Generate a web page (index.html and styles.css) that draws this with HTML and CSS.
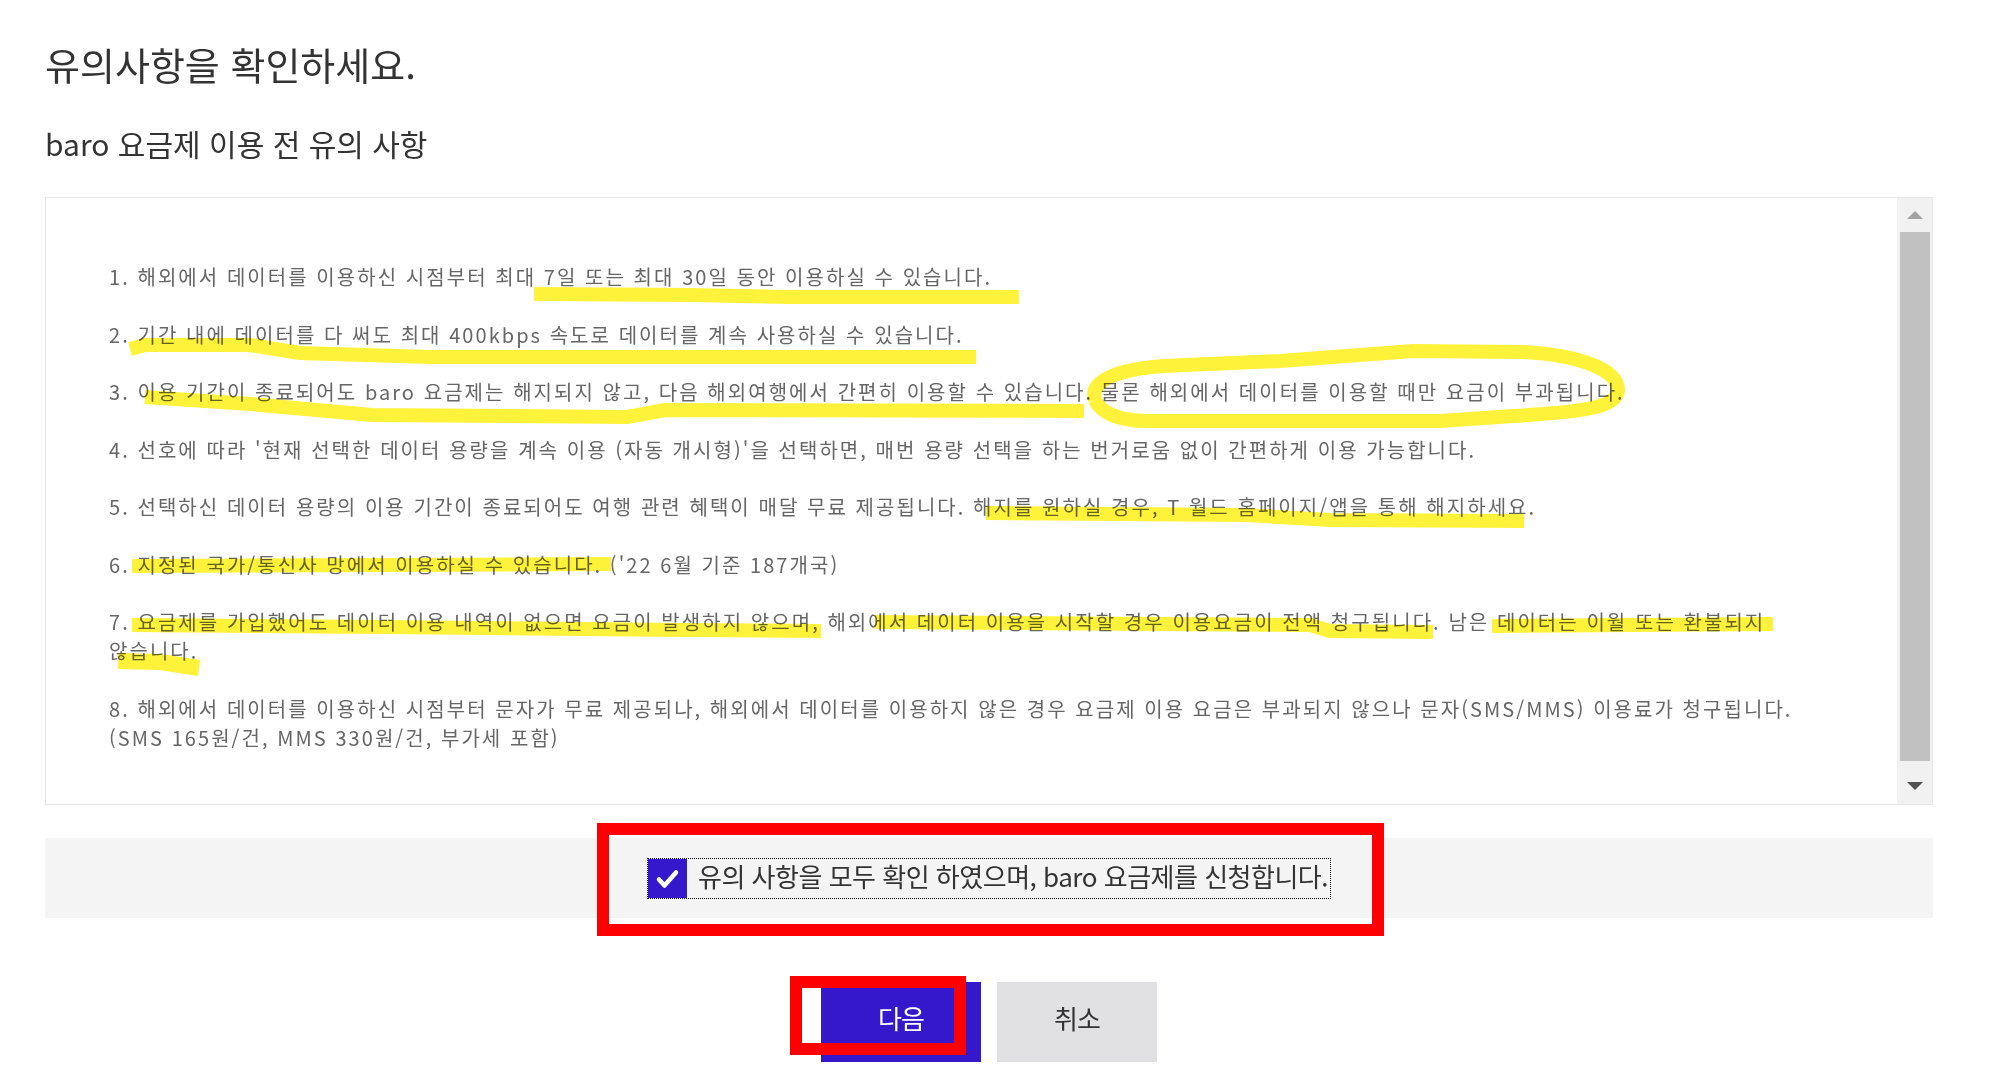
FILE: index.html
```html
<!DOCTYPE html>
<html lang="ko">
<head>
    <meta charset="UTF-8">
    <meta name="viewport" content="width=device-width, initial-scale=1.0">
    <title>baro 요금제 유의사항</title>
    <link rel="stylesheet" href="styles.css">
</head>
<body>
    <div class="page">
        <h1 class="title">유의사항을 확인하세요.</h1>
        <h2 class="subtitle">baro 요금제 이용 전 유의 사항</h2>

        <div class="notice-box">
            <ol class="notice-list">
                <li>1. 해외에서 데이터를 이용하신 시점부터 최대 7일 또는 최대 30일 동안 이용하실 수 있습니다.</li>
                <li>2. 기간 내에 데이터를 다 써도 최대 400kbps 속도로 데이터를 계속 사용하실 수 있습니다.</li>
                <li>3. 이용 기간이 종료되어도 baro 요금제는 해지되지 않고, 다음 해외여행에서 간편히 이용할 수 있습니다. 물론 해외에서 데이터를 이용할 때만 요금이 부과됩니다.</li>
                <li>4. 선호에 따라 '현재 선택한 데이터 용량을 계속 이용 (자동 개시형)'을 선택하면, 매번 용량 선택을 하는 번거로움 없이 간편하게 이용 가능합니다.</li>
                <li>5. 선택하신 데이터 용량의 이용 기간이 종료되어도 여행 관련 혜택이 매달 무료 제공됩니다. 해지를 원하실 경우, T 월드 홈페이지/앱을 통해 해지하세요.</li>
                <li>6. 지정된 국가/통신사 망에서 이용하실 수 있습니다. ('22 6월 기준 187개국)</li>
                <li>7. 요금제를 가입했어도 데이터 이용 내역이 없으면 요금이 발생하지 않으며, 해외에서 데이터 이용을 시작할 경우 이용요금이 전액 청구됩니다. 남은 데이터는 이월 또는 환불되지<br>않습니다.</li>
                <li>8. 해외에서 데이터를 이용하신 시점부터 문자가 무료 제공되나, 해외에서 데이터를 이용하지 않은 경우 요금제 이용 요금은 부과되지 않으나 문자(SMS/MMS) 이용료가 청구됩니다.<br>(SMS 165원/건, MMS 330원/건, 부가세 포함)</li>
            </ol>
            <div class="scrollbar">
                <span class="scroll-btn up"></span>
                <span class="scroll-thumb"></span>
                <span class="scroll-btn down"></span>
            </div>
        </div>

        <div class="agree-bar">
            <label class="agree">
                <span class="checkbox">
                    <svg width="39" height="39" viewBox="0 0 39 39">
                        <path d="M11 20.5 L16.5 26.5 L28 13.5" fill="none" stroke="#fff" stroke-width="4.5" stroke-linecap="round" stroke-linejoin="round"/>
                    </svg>
                </span>
                <span class="agree-text">유의 사항을 모두 확인 하였으며, baro 요금제를 신청합니다.</span>
            </label>
        </div>

        <div class="actions">
            <button class="btn btn-primary">다음</button>
            <button class="btn btn-cancel">취소</button>
        </div>
    </div>

    <!-- highlighter marks drawn over the page -->
    <svg class="marker" width="2014" height="1091" viewBox="0 0 2014 1091">
        <g fill="none" stroke="#fff23a" stroke-width="14" stroke-linejoin="round">
            <polyline points="534,294 690,295 789,297 1019,297"/>
            <polyline points="130,349 145,345 250,345 300,353 430,357 976,357"/>
            <polyline points="145,397 250,404 372,415 627,417 665,410 1084,411"/>
            <path d="M1095,400 C1088,378 1125,369 1163,366 L1280,361 L1413,351 L1523,352 C1580,355 1618,370 1618,390 C1618,408 1580,412 1513,416 L1440,421 L1147,421 C1118,421 1100,412 1095,400"/>
            <polyline points="986,513 1246,515 1330,520 1524,521"/>
            <polyline points="132,566 611,564"/>
            <polyline points="132,625 384,627 684,630 821,631"/>
            <polyline points="875,622 1310,625 1330,631 1433,632"/>
            <polyline points="1492,626 1773,624"/>
            <polyline points="118,661 160,662 199,668" stroke-width="16"/>
        </g>
    </svg>

    <svg class="redline" width="2014" height="1091" viewBox="0 0 2014 1091">
        <g fill="none" stroke="#ff0000" stroke-width="12">
            <rect x="603" y="829" width="775" height="101"/>
            <rect x="796" y="982" width="164" height="67"/>
        </g>
    </svg>
</body>
</html>
```

FILE: styles.css
```css
* {
    margin: 0;
    padding: 0;
    box-sizing: border-box;
}

body {
    font-family: "Noto Sans CJK KR", "Noto Sans", sans-serif;
    background: #fff;
    color: #333;
    position: relative;
    min-height: 100vh;
    overflow: hidden;
}

.page {
    width: 1888px;
    margin-left: 45px;
    padding-top: 41px;
}

.title {
    font-size: 38px;
    line-height: 46px;
    font-weight: 400;
    color: #333;
}

.subtitle {
    margin-top: 38px;
    font-size: 30px;
    line-height: 36px;
    font-weight: 400;
    color: #333;
}

.notice-box {
    margin-top: 36px;
    height: 608px;
    border: 1px solid #e6e6e6;
    display: flex;
}

.notice-list {
    flex: 1;
    list-style: none;
    padding: 64px 30px 0 63px;
    font-size: 20px;
    line-height: 29px;
    letter-spacing: 2.05px;
    color: #666;
}

.notice-list li + li {
    margin-top: 28.5px;
}

.scrollbar {
    width: 35px;
    background: #f1f1f1;
    display: flex;
    flex-direction: column;
    align-items: center;
}

.scroll-btn {
    width: 100%;
    display: flex;
    justify-content: center;
}

.scroll-btn.up {
    height: 34px;
    align-items: center;
}

.scroll-btn.up::before {
    content: "";
    border-left: 8px solid transparent;
    border-right: 8px solid transparent;
    border-bottom: 8px solid #a3a3a3;
}

.scroll-thumb {
    width: 30px;
    height: 529px;
    background: #c1c1c1;
}

.scroll-btn.down {
    flex: 1;
    padding-top: 21px;
}

.scroll-btn.down::before {
    content: "";
    height: 0;
    border-left: 8px solid transparent;
    border-right: 8px solid transparent;
    border-top: 8px solid #505050;
}

.agree-bar {
    margin-top: 33px;
    height: 80px;
    background: #f4f4f4;
    display: flex;
    align-items: center;
    justify-content: center;
}

.agree {
    display: flex;
    align-items: center;
    gap: 11px;
    height: 39px;
    padding-right: 2px;
    outline: 1px dotted #000;
}

.checkbox {
    width: 39px;
    height: 39px;
    background: #3618cc;
    display: flex;
}

.agree-text {
    font-size: 26px;
    line-height: 35px;
    padding-bottom: 5px;
    letter-spacing: -0.5px;
    color: #333;
}

.actions {
    margin-top: 64px;
    display: flex;
    justify-content: center;
    gap: 16px;
}

.btn {
    width: 160px;
    height: 80px;
    padding-bottom: 10px;
    border: none;
    font-family: inherit;
    font-size: 26px;
    letter-spacing: -1px;
}

.btn-primary {
    background: #3618cc;
    color: #fff;
}

.btn-cancel {
    background: #e1e1e3;
    color: #333;
}

.marker,
.redline {
    position: absolute;
    top: 0;
    left: 0;
    pointer-events: none;
}

.marker {
    mix-blend-mode: multiply;
}
```
